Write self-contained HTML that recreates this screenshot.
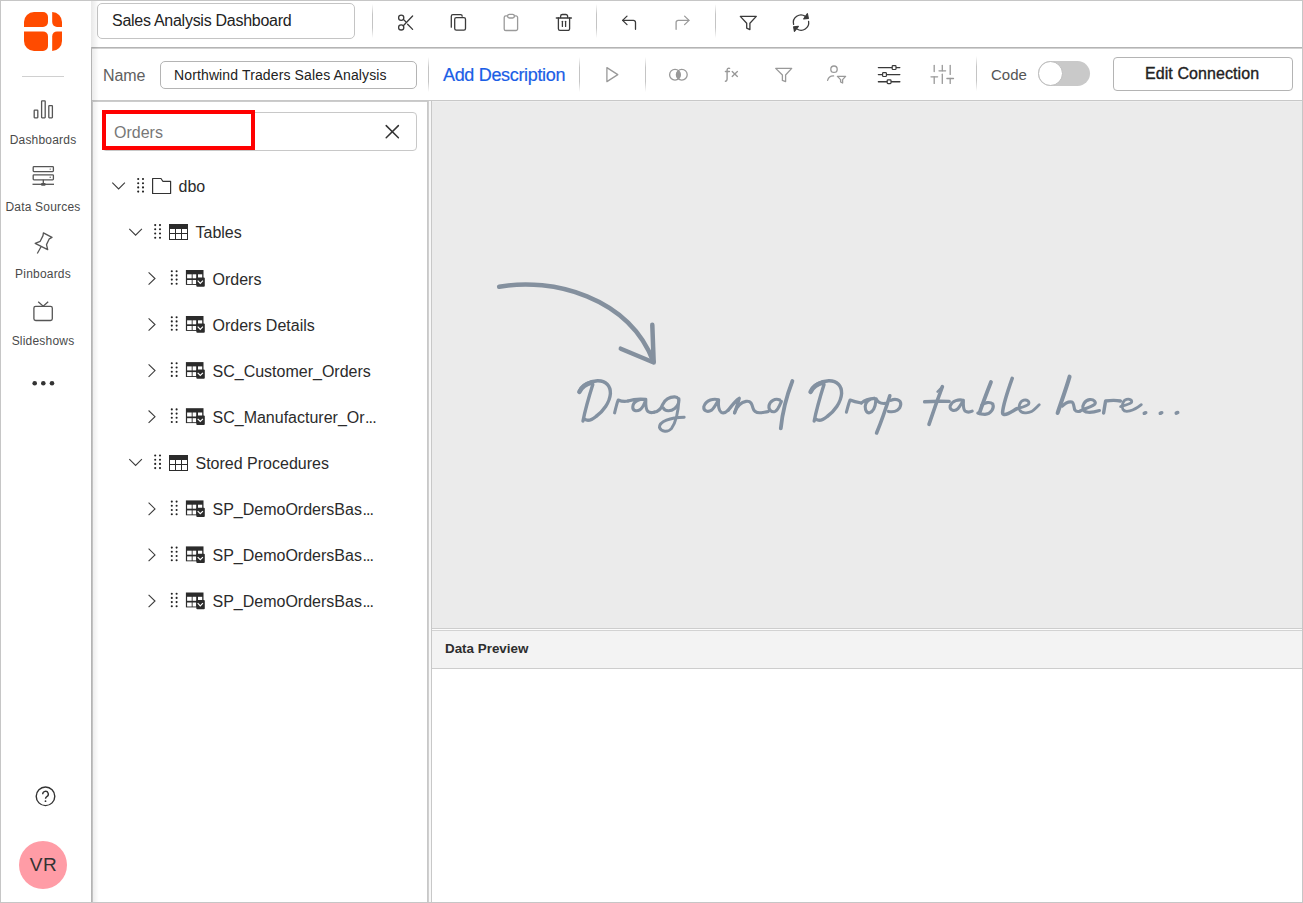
<!DOCTYPE html>
<html><head><meta charset="utf-8">
<style>
*{margin:0;padding:0;box-sizing:border-box}
html,body{width:1303px;height:903px;overflow:hidden;background:#fff;font-family:"Liberation Sans",sans-serif;color:#333}
.a{position:absolute}
#frame{position:absolute;left:0;top:0;width:1303px;height:903px;border:1px solid #c6c6c6;pointer-events:none;z-index:50}
.lbl{position:absolute;left:0;width:86px;text-align:center;font-size:12px;line-height:14px;color:#4a4a4a;letter-spacing:0.2px;white-space:nowrap}
.sep{position:absolute;width:1px;background:linear-gradient(rgba(196,196,196,0),#c4c4c4 30%,#c4c4c4 70%,rgba(196,196,196,0))}
svg{position:absolute;overflow:visible}
.t{position:absolute;white-space:nowrap;line-height:20px}
.row{position:absolute;left:0;width:330px;height:46px}
.row .tx{position:absolute;top:7px;font-size:16px;line-height:20px;color:#2b2b2b;white-space:nowrap}
</style></head><body>
<div id="frame"></div>

<!-- ============ Sidebar ============ -->
<svg style="left:24px;top:11.5px" width="38" height="39" viewBox="0 0 38 39">
  <g fill="#ff4b00">
  <path d="M0 15 V10 A10 10 0 0 1 10 0 H19 A5 5 0 0 1 24 5 V10 A5 5 0 0 1 19 15 Z"/>
  <path d="M28.2 0 A9.8 10 0 0 1 38 10 V15 H33 A4.8 5 0 0 1 28.2 10 Z"/>
  <path d="M0 19.4 H19 A5 5 0 0 1 24 24.4 V34 A5 5 0 0 1 19 39 H10 A10 10 0 0 1 0 29 Z"/>
  <path d="M33 19.4 H38 V29 A9.8 10 0 0 1 28.2 39 V24.4 A4.8 5 0 0 1 33 19.4 Z"/>
  </g>
</svg>
<div class="a" style="left:22px;top:76px;width:42px;height:1px;background:#d0d0d0"></div>

<!-- dashboards icon -->
<svg style="left:0;top:0" width="91" height="400" viewBox="0 0 91 400">
  <g fill="none" stroke="#555" stroke-width="1.3">
    <rect x="34.2" y="110.2" width="3.6" height="7.6" rx="0.5"/>
    <rect x="41.6" y="100.9" width="3.6" height="16.9" rx="0.5"/>
    <rect x="48.8" y="105.7" width="3.6" height="12.1" rx="0.5"/>
    <!-- server -->
    <rect x="33.2" y="166.6" width="20.2" height="5" rx="0.8"/>
    <rect x="33.2" y="174.8" width="20.2" height="5" rx="0.8"/>
    <line x1="43.3" y1="179.8" x2="43.3" y2="184"/>
    <line x1="32.5" y1="184.3" x2="54" y2="184.3"/>
    <!-- pin -->
    <path d="M43.4 232.9 L52 237.4 L49.3 238.8 L46.5 244.6 L47.7 249.7 L35.2 243.4 L40.2 241.3 L43 235.6 Z" stroke-linejoin="round"/>
    <line x1="41.2" y1="246.5" x2="37.3" y2="253.5"/>
    <!-- tv -->
    <rect x="33.9" y="306.3" width="18.4" height="14.2" rx="1.8"/>
    <polyline points="38.2,301.8 43.2,306.2 48.2,301.8"/>
  </g>
  <g fill="#555">
    <rect x="41" y="182.9" width="4.6" height="2.8" rx="1"/>
    <circle cx="50.2" cy="169.1" r="0.7"/>
    <circle cx="50.2" cy="177.3" r="0.7"/>
  </g>
  <g fill="#333">
    <circle cx="34.7" cy="383.2" r="2.3"/>
    <circle cx="43.3" cy="383.2" r="2.3"/>
    <circle cx="52" cy="383.2" r="2.3"/>
  </g>
</svg>
<div class="lbl" style="top:133px">Dashboards</div>
<div class="lbl" style="top:200px">Data Sources</div>
<div class="lbl" style="top:267px">Pinboards</div>
<div class="lbl" style="top:334px">Slideshows</div>

<!-- help -->
<svg style="left:35px;top:786px" width="21" height="21" viewBox="0 0 21 21">
  <circle cx="10.5" cy="10.3" r="9.3" fill="none" stroke="#333" stroke-width="1.4"/>
  <path d="M7.7 8.2 A2.8 2.8 0 1 1 11.8 10.6 C10.8 11.2 10.5 11.6 10.5 12.8" fill="none" stroke="#333" stroke-width="1.4"/>
  <circle cx="10.5" cy="15.2" r="0.9" fill="#333"/>
</svg>
<!-- avatar -->
<div class="a" style="left:19px;top:841px;width:48px;height:48px;border-radius:50%;background:#ff9ca6"></div>
<div class="t" style="left:19.5px;top:854.5px;width:48px;text-align:center;font-size:19px;color:#333;letter-spacing:0.6px">VR</div>

<!-- main area left border + shadow -->
<div class="a" style="left:91px;top:47px;width:1px;height:856px;background:#c4c4c4"></div>
<div class="a" style="left:91px;top:1px;width:8px;height:901px;background:linear-gradient(90deg,rgba(0,0,0,0.09),rgba(0,0,0,0));z-index:5"></div>


<!-- ============ Top toolbar ============ -->
<div class="a" style="left:97px;top:3px;width:258px;height:36px;border:1px solid #c4c4c4;border-radius:5px"></div>
<div class="t" style="left:112px;top:11px;font-size:16px;color:#222;letter-spacing:-0.27px">Sales Analysis Dashboard</div>
<div class="sep" style="left:372px;top:4px;height:34px"></div>
<div class="sep" style="left:596px;top:4px;height:34px"></div>
<div class="sep" style="left:715px;top:4px;height:34px"></div>
<svg style="left:0;top:0" width="1303" height="100" viewBox="0 0 1303 100">
  <g fill="none" stroke="#3a3a3a" stroke-width="1.3" stroke-linecap="round" stroke-linejoin="round">
    <!-- scissors -->
    <circle cx="401.2" cy="17.8" r="2.6"/>
    <circle cx="401.2" cy="27.4" r="2.6"/>
    <line x1="403.3" y1="25.8" x2="412.6" y2="16"/>
    <line x1="403.4" y1="19.4" x2="405.8" y2="21.8"/>
    <line x1="407.6" y1="24.2" x2="412.6" y2="29.4"/>
    <!-- copy -->
    <path d="M451.3 27.2 V16.2 A1.6 1.6 0 0 1 452.9 14.6 H460.6 A1.6 1.6 0 0 1 462.2 16.2"/>
    <rect x="454.7" y="17.6" width="10.8" height="12.6" rx="1.6"/>
    <!-- trash -->
    <line x1="556.4" y1="18" x2="571.3" y2="18" stroke-width="1.6"/>
    <path d="M560.6 17.6 V16.3 A1.8 1.8 0 0 1 562.4 14.5 H565.8 A1.8 1.8 0 0 1 567.6 16.3 V17.6"/>
    <path d="M558.4 18 V28.8 A1.6 1.6 0 0 0 560 30.4 H568 A1.6 1.6 0 0 0 569.6 28.8 V18"/>
    <line x1="562.4" y1="21.3" x2="562.4" y2="26.4"/>
    <line x1="565.6" y1="21.3" x2="565.6" y2="26.4"/>
    <!-- undo -->
    <path d="M627 16.1 L622.6 20.4 L627 24.6"/>
    <path d="M622.8 20.4 H633.4 A2 2 0 0 1 635.5 22.4 V29.3"/>
    <!-- filter -->
    <path d="M740.3 16.4 H756.3 L749.9 23.2 V29.6 L746.7 28.2 V23.2 Z"/>
    <!-- refresh -->
    <path d="M793.6 24.4 A7.6 7.6 0 0 1 805.4 16.4"/>
    <path d="M808.6 21.4 A7.6 7.6 0 0 1 797 29"/>
  </g>
  <g fill="none" stroke="#9a9a9a" stroke-width="1.3" stroke-linecap="round" stroke-linejoin="round">
    <!-- paste -->
    <path d="M507.4 15.9 H505.8 A1.6 1.6 0 0 0 504.2 17.5 V28.9 A1.6 1.6 0 0 0 505.8 30.5 H516 A1.6 1.6 0 0 0 517.6 28.9 V17.5 A1.6 1.6 0 0 0 516 15.9 H514.4"/>
    <rect x="507.6" y="14.4" width="6.8" height="3.6" rx="1.8"/>
    <!-- redo -->
    <path d="M684.6 16.1 L689 20.4 L684.6 24.6"/>
    <path d="M688.8 20.4 H678.2 A2 2 0 0 0 676.1 22.4 V29.3"/>
  </g>
  <g fill="#3a3a3a">
    <path d="M803.6 19 L807.4 13.6 L808.4 18.4 Z" stroke="#3a3a3a" stroke-width="1.1" stroke-linejoin="round"/>
    <path d="M798.4 26.4 L794.4 31.4 L793.6 26.8 Z" stroke="#3a3a3a" stroke-width="1.1" stroke-linejoin="round"/>
  </g>
</svg>
<div class="a" style="left:92px;top:47px;width:1211px;height:1px;background:#b4b4b4"></div>
<div class="a" style="left:92px;top:48px;width:1211px;height:1px;background:#d2d2d2"></div>

<!-- ============ Second toolbar ============ -->
<div class="t" style="left:103px;top:65.5px;font-size:16px;color:#606060;letter-spacing:-0.1px">Name</div>
<div class="a" style="left:160px;top:61px;width:257px;height:28px;border:1px solid #b4b4b4;border-radius:5px"></div>
<div class="t" style="left:174px;top:65px;font-size:14px;color:#222;letter-spacing:0.13px">Northwind Traders Sales Analysis</div>
<div class="sep" style="left:428px;top:57px;height:35px"></div>
<div class="t" style="left:443px;top:65px;font-size:18px;color:#1a5ee6;letter-spacing:-0.33px;-webkit-text-stroke:0.2px #1a5ee6">Add Description</div>
<div class="sep" style="left:579px;top:57px;height:35px"></div>
<div class="sep" style="left:645px;top:57px;height:35px"></div>
<div class="sep" style="left:976px;top:56px;height:35px"></div>
<svg style="left:0;top:0" width="1303" height="100" viewBox="0 0 1303 100">
  <g fill="none" stroke="#999" stroke-width="1.3" stroke-linecap="round" stroke-linejoin="round">
    <path d="M606.9 67.6 L617.8 74.6 L606.9 81.6 Z"/>
    <circle cx="675" cy="74.7" r="5.4"/>
    <circle cx="681.8" cy="74.7" r="5.4"/>
    <path d="M775.7 68.4 H791.7 L785.6 75 V81.6 L782.4 80.4 V75 Z"/>
    <circle cx="834" cy="69.2" r="3.2"/>
    <path d="M827.6 80.3 A6 6 0 0 1 833.6 75.9"/>
    <path d="M837.4 76.4 H845.6 L842.6 79.6 V83 L840.6 82 V79.6 Z"/>
    <line x1="934.2" y1="65.4" x2="934.2" y2="71.6"/>
    <line x1="934.2" y1="76.8" x2="934.2" y2="83.4"/>
    <line x1="931" y1="76.8" x2="937.6" y2="76.8"/>
    <line x1="942.3" y1="65.4" x2="942.3" y2="70.8"/>
    <line x1="939" y1="70.8" x2="945.6" y2="70.8"/>
    <line x1="942.3" y1="74.2" x2="942.3" y2="83.4"/>
    <line x1="950.2" y1="65.4" x2="950.2" y2="74.4"/>
    <line x1="946.9" y1="78.5" x2="953.5" y2="78.5"/>
    <line x1="950.2" y1="78.5" x2="950.2" y2="83.4"/>
  </g>
  <path d="M678.4 70.4 A5.4 5.4 0 0 1 678.4 79 A5.4 5.4 0 0 1 678.4 70.4 Z" fill="#999"/>
  <g fill="none" stroke="#3a3a3a" stroke-width="1.4" stroke-linecap="round">
    <line x1="878.4" y1="67.6" x2="899.8" y2="67.6"/>
    <line x1="878.4" y1="74.6" x2="899.8" y2="74.6"/>
    <line x1="878.4" y1="81.7" x2="899.8" y2="81.7"/>
  </g>
  <g fill="#fff" stroke="#3a3a3a" stroke-width="1.2">
    <rect x="892.2" y="65.7" width="3.8" height="3.8" rx="0.8"/>
    <rect x="882.6" y="72.7" width="3.8" height="3.8" rx="0.8"/>
    <rect x="887.2" y="79.8" width="3.8" height="3.8" rx="0.8"/>
  </g>
</svg>
<svg style="left:0;top:0" width="760" height="100" viewBox="0 0 760 100">
  <g fill="none" stroke="#999" stroke-width="1.4" stroke-linecap="round">
    <path d="M729.6 68.4 C728 68 727.1 68.6 727.1 70.2 V78.8 C727.1 80.6 726.4 81.2 725.4 81.2"/>
    <line x1="725.4" y1="71.5" x2="729.4" y2="71.5"/>
    <line x1="732.2" y1="71.6" x2="737.4" y2="76.4"/>
    <line x1="737.4" y1="71.6" x2="732.2" y2="76.4"/>
  </g>
</svg>
<div class="t" style="left:991px;top:64.5px;font-size:15px;color:#555">Code</div>
<div class="a" style="left:1038px;top:61px;width:52px;height:25px;border-radius:13px;background:#c9c9c9"></div>
<div class="a" style="left:1038px;top:61px;width:25px;height:25px;border-radius:50%;background:#fff;border:1px solid #bcbcbc"></div>
<div class="a" style="left:1113px;top:57px;width:180px;height:34px;border:1px solid #b4b4b4;border-radius:4px"></div>
<div class="t" style="left:1145px;top:64px;font-size:16px;color:#222;-webkit-text-stroke:0.35px #222;letter-spacing:0.08px">Edit Connection</div>
<div class="a" style="left:92px;top:100px;width:1211px;height:1px;background:#c8c8c8"></div>



<!-- ============ Left panel ============ -->
<div class="a" style="left:92px;top:101px;width:335px;height:1px;background:#cccccc"></div>
<div class="a" style="left:92px;top:101px;width:1px;height:802px;background:#d2d2d2"></div>
<div class="a" style="left:427px;top:101px;width:1px;height:802px;background:#c8c8c8"></div>
<div class="a" style="left:428px;top:101px;width:1px;height:802px;background:#cfcfcf"></div>
<div class="a" style="left:429px;top:101px;width:2px;height:802px;background:#f8f8f8"></div>
<div class="a" style="left:431px;top:101px;width:1px;height:802px;background:#c8c8c8"></div>
<div class="a" style="left:102px;top:112px;width:315px;height:39px;border:1px solid #c8c8c8;border-radius:4px"></div>
<div class="a" style="left:102px;top:110px;width:153px;height:40px;border:4px solid #ff0000"></div>
<div class="t" style="left:114px;top:123px;font-size:16px;color:#777">Orders</div>
<svg style="left:0;top:0" width="430" height="660" viewBox="0 0 430 660">
  <g stroke="#333" stroke-width="1.5" stroke-linecap="round">
    <line x1="386.2" y1="125.6" x2="398.4" y2="137.8"/>
    <line x1="398.4" y1="125.6" x2="386.2" y2="137.8"/>
  </g>
</svg>
<svg style="left:0;top:0" width="430" height="660" viewBox="0 0 430 660">
<polyline points="112.3,182.7 118.6,189.0 124.9,182.7" fill="none" stroke="#3c3c3c" stroke-width="1.1"/>
<circle cx="138.2" cy="179.0" r="1.05" fill="#222"/>
<circle cx="138.2" cy="183.2" r="1.05" fill="#222"/>
<circle cx="138.2" cy="187.4" r="1.05" fill="#222"/>
<circle cx="138.2" cy="191.6" r="1.05" fill="#222"/>
<circle cx="143.0" cy="179.0" r="1.05" fill="#222"/>
<circle cx="143.0" cy="183.2" r="1.05" fill="#222"/>
<circle cx="143.0" cy="187.4" r="1.05" fill="#222"/>
<circle cx="143.0" cy="191.6" r="1.05" fill="#222"/>
<path d="M152.6 193.5 V178.5 H161.0 L162.8 181.3 H170.6 V193.5 Z" fill="none" stroke="#333" stroke-width="1.2" stroke-linejoin="round"/>
<polyline points="129.3,228.8 135.6,235.1 141.9,228.8" fill="none" stroke="#3c3c3c" stroke-width="1.1"/>
<circle cx="155.2" cy="225.1" r="1.05" fill="#222"/>
<circle cx="155.2" cy="229.3" r="1.05" fill="#222"/>
<circle cx="155.2" cy="233.5" r="1.05" fill="#222"/>
<circle cx="155.2" cy="237.7" r="1.05" fill="#222"/>
<circle cx="160.0" cy="225.1" r="1.05" fill="#222"/>
<circle cx="160.0" cy="229.3" r="1.05" fill="#222"/>
<circle cx="160.0" cy="233.5" r="1.05" fill="#222"/>
<circle cx="160.0" cy="237.7" r="1.05" fill="#222"/>
<rect x="169" y="224" width="19" height="16" fill="#2b2b2b"/>
<rect x="170" y="229" width="5" height="4" fill="#fff"/>
<rect x="176" y="229" width="5" height="4" fill="#fff"/>
<rect x="182" y="229" width="5" height="4" fill="#fff"/>
<rect x="170" y="234" width="5" height="5" fill="#fff"/>
<rect x="176" y="234" width="5" height="5" fill="#fff"/>
<rect x="182" y="234" width="5" height="5" fill="#fff"/>
<polyline points="148.6,272.3 155.0,278.5 148.6,284.7" fill="none" stroke="#3c3c3c" stroke-width="1.1"/>
<circle cx="171.8" cy="271.2" r="1.05" fill="#222"/>
<circle cx="171.8" cy="275.4" r="1.05" fill="#222"/>
<circle cx="171.8" cy="279.6" r="1.05" fill="#222"/>
<circle cx="171.8" cy="283.8" r="1.05" fill="#222"/>
<circle cx="176.6" cy="271.2" r="1.05" fill="#222"/>
<circle cx="176.6" cy="275.4" r="1.05" fill="#222"/>
<circle cx="176.6" cy="279.6" r="1.05" fill="#222"/>
<circle cx="176.6" cy="283.8" r="1.05" fill="#222"/>
<rect x="185.9" y="270.0" width="17.6" height="14.9" fill="#2b2b2b"/>
<rect x="187.1" y="274.3" width="4.6" height="4.0" fill="#fff"/>
<rect x="192.6" y="274.3" width="3.6" height="4.0" fill="#fff"/>
<rect x="198.0" y="274.3" width="4.2" height="4.0" fill="#fff"/>
<rect x="187.1" y="280.0" width="4.6" height="4.0" fill="#fff"/>
<rect x="192.6" y="280.0" width="3.6" height="4.0" fill="#fff"/>
<rect x="196.3" y="277.4" width="8.5" height="9.3" rx="1" fill="#2b2b2b"/>
<polyline points="197.7,280.7 200.3,283.3 202.9,280.7" fill="none" stroke="#fff" stroke-width="1.2"/>
<polyline points="148.6,318.3 155.0,324.5 148.6,330.7" fill="none" stroke="#3c3c3c" stroke-width="1.1"/>
<circle cx="171.8" cy="317.2" r="1.05" fill="#222"/>
<circle cx="171.8" cy="321.4" r="1.05" fill="#222"/>
<circle cx="171.8" cy="325.6" r="1.05" fill="#222"/>
<circle cx="171.8" cy="329.8" r="1.05" fill="#222"/>
<circle cx="176.6" cy="317.2" r="1.05" fill="#222"/>
<circle cx="176.6" cy="321.4" r="1.05" fill="#222"/>
<circle cx="176.6" cy="325.6" r="1.05" fill="#222"/>
<circle cx="176.6" cy="329.8" r="1.05" fill="#222"/>
<rect x="185.9" y="316.0" width="17.6" height="14.9" fill="#2b2b2b"/>
<rect x="187.1" y="320.3" width="4.6" height="4.0" fill="#fff"/>
<rect x="192.6" y="320.3" width="3.6" height="4.0" fill="#fff"/>
<rect x="198.0" y="320.3" width="4.2" height="4.0" fill="#fff"/>
<rect x="187.1" y="326.0" width="4.6" height="4.0" fill="#fff"/>
<rect x="192.6" y="326.0" width="3.6" height="4.0" fill="#fff"/>
<rect x="196.3" y="323.4" width="8.5" height="9.3" rx="1" fill="#2b2b2b"/>
<polyline points="197.7,326.7 200.3,329.3 202.9,326.7" fill="none" stroke="#fff" stroke-width="1.2"/>
<polyline points="148.6,364.4 155.0,370.6 148.6,376.8" fill="none" stroke="#3c3c3c" stroke-width="1.1"/>
<circle cx="171.8" cy="363.3" r="1.05" fill="#222"/>
<circle cx="171.8" cy="367.5" r="1.05" fill="#222"/>
<circle cx="171.8" cy="371.7" r="1.05" fill="#222"/>
<circle cx="171.8" cy="375.9" r="1.05" fill="#222"/>
<circle cx="176.6" cy="363.3" r="1.05" fill="#222"/>
<circle cx="176.6" cy="367.5" r="1.05" fill="#222"/>
<circle cx="176.6" cy="371.7" r="1.05" fill="#222"/>
<circle cx="176.6" cy="375.9" r="1.05" fill="#222"/>
<rect x="185.9" y="362.1" width="17.6" height="14.9" fill="#2b2b2b"/>
<rect x="187.1" y="366.4" width="4.6" height="4.0" fill="#fff"/>
<rect x="192.6" y="366.4" width="3.6" height="4.0" fill="#fff"/>
<rect x="198.0" y="366.4" width="4.2" height="4.0" fill="#fff"/>
<rect x="187.1" y="372.1" width="4.6" height="4.0" fill="#fff"/>
<rect x="192.6" y="372.1" width="3.6" height="4.0" fill="#fff"/>
<rect x="196.3" y="369.5" width="8.5" height="9.3" rx="1" fill="#2b2b2b"/>
<polyline points="197.7,372.8 200.3,375.4 202.9,372.8" fill="none" stroke="#fff" stroke-width="1.2"/>
<polyline points="148.6,410.5 155.0,416.7 148.6,422.9" fill="none" stroke="#3c3c3c" stroke-width="1.1"/>
<circle cx="171.8" cy="409.4" r="1.05" fill="#222"/>
<circle cx="171.8" cy="413.6" r="1.05" fill="#222"/>
<circle cx="171.8" cy="417.8" r="1.05" fill="#222"/>
<circle cx="171.8" cy="422.0" r="1.05" fill="#222"/>
<circle cx="176.6" cy="409.4" r="1.05" fill="#222"/>
<circle cx="176.6" cy="413.6" r="1.05" fill="#222"/>
<circle cx="176.6" cy="417.8" r="1.05" fill="#222"/>
<circle cx="176.6" cy="422.0" r="1.05" fill="#222"/>
<rect x="185.9" y="408.2" width="17.6" height="14.9" fill="#2b2b2b"/>
<rect x="187.1" y="412.5" width="4.6" height="4.0" fill="#fff"/>
<rect x="192.6" y="412.5" width="3.6" height="4.0" fill="#fff"/>
<rect x="198.0" y="412.5" width="4.2" height="4.0" fill="#fff"/>
<rect x="187.1" y="418.2" width="4.6" height="4.0" fill="#fff"/>
<rect x="192.6" y="418.2" width="3.6" height="4.0" fill="#fff"/>
<rect x="196.3" y="415.6" width="8.5" height="9.3" rx="1" fill="#2b2b2b"/>
<polyline points="197.7,418.9 200.3,421.5 202.9,418.9" fill="none" stroke="#fff" stroke-width="1.2"/>
<polyline points="129.3,459.2 135.6,465.5 141.9,459.2" fill="none" stroke="#3c3c3c" stroke-width="1.1"/>
<circle cx="155.2" cy="455.5" r="1.05" fill="#222"/>
<circle cx="155.2" cy="459.7" r="1.05" fill="#222"/>
<circle cx="155.2" cy="463.9" r="1.05" fill="#222"/>
<circle cx="155.2" cy="468.1" r="1.05" fill="#222"/>
<circle cx="160.0" cy="455.5" r="1.05" fill="#222"/>
<circle cx="160.0" cy="459.7" r="1.05" fill="#222"/>
<circle cx="160.0" cy="463.9" r="1.05" fill="#222"/>
<circle cx="160.0" cy="468.1" r="1.05" fill="#222"/>
<rect x="169" y="455" width="19" height="16" fill="#2b2b2b"/>
<rect x="170" y="460" width="5" height="4" fill="#fff"/>
<rect x="176" y="460" width="5" height="4" fill="#fff"/>
<rect x="182" y="460" width="5" height="4" fill="#fff"/>
<rect x="170" y="465" width="5" height="5" fill="#fff"/>
<rect x="176" y="465" width="5" height="5" fill="#fff"/>
<rect x="182" y="465" width="5" height="5" fill="#fff"/>
<polyline points="148.6,502.7 155.0,508.9 148.6,515.1" fill="none" stroke="#3c3c3c" stroke-width="1.1"/>
<circle cx="171.8" cy="501.6" r="1.05" fill="#222"/>
<circle cx="171.8" cy="505.8" r="1.05" fill="#222"/>
<circle cx="171.8" cy="510.0" r="1.05" fill="#222"/>
<circle cx="171.8" cy="514.2" r="1.05" fill="#222"/>
<circle cx="176.6" cy="501.6" r="1.05" fill="#222"/>
<circle cx="176.6" cy="505.8" r="1.05" fill="#222"/>
<circle cx="176.6" cy="510.0" r="1.05" fill="#222"/>
<circle cx="176.6" cy="514.2" r="1.05" fill="#222"/>
<rect x="185.9" y="500.4" width="17.6" height="14.9" fill="#2b2b2b"/>
<rect x="187.1" y="504.7" width="4.6" height="4.0" fill="#fff"/>
<rect x="192.6" y="504.7" width="3.6" height="4.0" fill="#fff"/>
<rect x="198.0" y="504.7" width="4.2" height="4.0" fill="#fff"/>
<rect x="187.1" y="510.4" width="4.6" height="4.0" fill="#fff"/>
<rect x="192.6" y="510.4" width="3.6" height="4.0" fill="#fff"/>
<rect x="196.3" y="507.8" width="8.5" height="9.3" rx="1" fill="#2b2b2b"/>
<polyline points="197.7,511.1 200.3,513.7 202.9,511.1" fill="none" stroke="#fff" stroke-width="1.2"/>
<polyline points="148.6,548.7 155.0,554.9 148.6,561.1" fill="none" stroke="#3c3c3c" stroke-width="1.1"/>
<circle cx="171.8" cy="547.6" r="1.05" fill="#222"/>
<circle cx="171.8" cy="551.8" r="1.05" fill="#222"/>
<circle cx="171.8" cy="556.0" r="1.05" fill="#222"/>
<circle cx="171.8" cy="560.2" r="1.05" fill="#222"/>
<circle cx="176.6" cy="547.6" r="1.05" fill="#222"/>
<circle cx="176.6" cy="551.8" r="1.05" fill="#222"/>
<circle cx="176.6" cy="556.0" r="1.05" fill="#222"/>
<circle cx="176.6" cy="560.2" r="1.05" fill="#222"/>
<rect x="185.9" y="546.4" width="17.6" height="14.9" fill="#2b2b2b"/>
<rect x="187.1" y="550.7" width="4.6" height="4.0" fill="#fff"/>
<rect x="192.6" y="550.7" width="3.6" height="4.0" fill="#fff"/>
<rect x="198.0" y="550.7" width="4.2" height="4.0" fill="#fff"/>
<rect x="187.1" y="556.4" width="4.6" height="4.0" fill="#fff"/>
<rect x="192.6" y="556.4" width="3.6" height="4.0" fill="#fff"/>
<rect x="196.3" y="553.8" width="8.5" height="9.3" rx="1" fill="#2b2b2b"/>
<polyline points="197.7,557.1 200.3,559.7 202.9,557.1" fill="none" stroke="#fff" stroke-width="1.2"/>
<polyline points="148.6,594.8 155.0,601.0 148.6,607.2" fill="none" stroke="#3c3c3c" stroke-width="1.1"/>
<circle cx="171.8" cy="593.7" r="1.05" fill="#222"/>
<circle cx="171.8" cy="597.9" r="1.05" fill="#222"/>
<circle cx="171.8" cy="602.1" r="1.05" fill="#222"/>
<circle cx="171.8" cy="606.3" r="1.05" fill="#222"/>
<circle cx="176.6" cy="593.7" r="1.05" fill="#222"/>
<circle cx="176.6" cy="597.9" r="1.05" fill="#222"/>
<circle cx="176.6" cy="602.1" r="1.05" fill="#222"/>
<circle cx="176.6" cy="606.3" r="1.05" fill="#222"/>
<rect x="185.9" y="592.5" width="17.6" height="14.9" fill="#2b2b2b"/>
<rect x="187.1" y="596.8" width="4.6" height="4.0" fill="#fff"/>
<rect x="192.6" y="596.8" width="3.6" height="4.0" fill="#fff"/>
<rect x="198.0" y="596.8" width="4.2" height="4.0" fill="#fff"/>
<rect x="187.1" y="602.5" width="4.6" height="4.0" fill="#fff"/>
<rect x="192.6" y="602.5" width="3.6" height="4.0" fill="#fff"/>
<rect x="196.3" y="599.9" width="8.5" height="9.3" rx="1" fill="#2b2b2b"/>
<polyline points="197.7,603.2 200.3,605.8 202.9,603.2" fill="none" stroke="#fff" stroke-width="1.2"/>
</svg>
<div class="t" style="left:178.5px;top:177px;font-size:16px;color:#2b2b2b">dbo</div>
<div class="t" style="left:195.5px;top:223px;font-size:16px;color:#2b2b2b">Tables</div>
<div class="t" style="left:212.5px;top:270px;font-size:16px;color:#2b2b2b">Orders</div>
<div class="t" style="left:212.5px;top:316px;font-size:16px;color:#2b2b2b">Orders Details</div>
<div class="t" style="left:212.5px;top:362px;font-size:16px;color:#2b2b2b">SC_Customer_Orders</div>
<div class="t" style="left:212.5px;top:408px;font-size:16px;color:#2b2b2b">SC_Manufacturer_Or<span style="letter-spacing:-0.9px;margin-left:0.5px">...</span></div>
<div class="t" style="left:195.5px;top:454px;font-size:16px;color:#2b2b2b">Stored Procedures</div>
<div class="t" style="left:212.5px;top:500px;font-size:16px;color:#2b2b2b">SP_DemoOrdersBas<span style="letter-spacing:-0.9px;margin-left:0.5px">...</span></div>
<div class="t" style="left:212.5px;top:546px;font-size:16px;color:#2b2b2b">SP_DemoOrdersBas<span style="letter-spacing:-0.9px;margin-left:0.5px">...</span></div>
<div class="t" style="left:212.5px;top:592px;font-size:16px;color:#2b2b2b">SP_DemoOrdersBas<span style="letter-spacing:-0.9px;margin-left:0.5px">...</span></div>
<!-- ============ Canvas ============ -->
<div class="a" style="left:432px;top:101px;width:870px;height:527px;background:#ebebeb"></div>
<div class="a" style="left:432px;top:101px;width:870px;height:1px;background:#efefef"></div>
<div class="a" style="left:432px;top:628px;width:870px;height:1px;background:#cdcdcd"></div>
<div class="a" style="left:432px;top:629px;width:870px;height:1px;background:#fcfcfc"></div>
<div class="a" style="left:432px;top:630px;width:870px;height:1px;background:#d2d2d2"></div>
<div class="a" style="left:432px;top:631px;width:870px;height:37px;background:#f3f3f3"></div>
<div class="a" style="left:432px;top:668px;width:870px;height:1px;background:#cdcdcd"></div>
<div class="t" style="left:445px;top:639px;font-size:13.4px;font-weight:bold;color:#2e2e2e">Data Preview</div>
<svg style="left:0;top:0" width="1303" height="660" viewBox="0 0 1303 660">
  <g fill="none" stroke="#84909e" stroke-width="4.5" stroke-linecap="round" stroke-linejoin="round">
    <path d="M499.2 286.8 C552 277 629 297 653.4 361.6"/>
    <path d="M652.3 324.8 L653.7 362.5 L620.8 348.7"/>
  </g>
</svg>
<svg style="left:0;top:0" width="1303" height="660" viewBox="0 0 1303 660">
<g fill="none" stroke="#8391a1" stroke-width="3.1" stroke-linecap="round" stroke-linejoin="round">
  <g>
    <path d="M579.4 391.6 C582 385.5 589 381.2 597.5 380.8 C606 380.6 610.6 386 610.4 393.5 C609.8 402.5 603 411.5 596 416.5 C592 419.8 587.5 421 585 419.4" stroke-width="3.4"/>
    <path d="M579.4 391.8 C581.5 387 587 383.5 592 382.4" stroke-width="4.6"/>
    <path d="M592.8 384.6 C589.2 396 585.2 410 583 421" stroke-width="3.4"/>
  </g>
  <path d="M614.6 412.8 C616 407 617.2 402.5 618.2 400 C621 401.2 624.5 401.8 628 401"/>
  <path d="M628 401 C631 400 636 398.4 645.8 399.4 C640 398.4 633.2 401.4 632.8 406.6 C632.4 410.6 636.4 412 640.2 409.6 C643 407.4 644.8 403 645.8 399.4 C645.6 404.2 645.8 409.6 648 411.6 C650 413 652 412.8 654 412.2"/>
  <path d="M654 412.2 C658.5 411.6 661 409 662.6 404.6 C664.4 399.6 669.6 396.8 674.6 396.9 C678.2 397.2 679.6 399.6 678.6 403 C677.4 407.2 672.8 410.6 668.6 410.8 C666 410.9 664 409.6 663.4 408"/>
  <path d="M679 398.6 C678.4 410.5 676.2 422 671.4 428.6 C668 432.4 661.4 432.2 659.4 427.4 C659.4 421.4 670 417.4 684.2 417.2" stroke-width="2.9"/>
  <path d="M718.6 399.8 C714 398.4 706 399.6 703.8 406.6 C703.4 411 707.6 412.6 711.6 410.2 C714.6 407.6 717 402.2 718.6 399.8 C718.2 404.2 718.6 410.2 721.2 412.2 C723.2 413.6 726.2 412.2 728.2 410.2"/>
  <path d="M728.2 410.2 C732 405.2 736 400.2 739.2 398.4 C738 403.2 736 409.2 734.6 413" stroke-width="3.4"/>
  <path d="M734.8 412 C737 406.6 741 402.2 746 401.4 C751 400.6 752 404.2 753 408.2 C754 412.2 758 413.2 762 412.6 C764 412.2 766 412 768.4 411.4"/>
  <path d="M779.8 400 C775 397.8 769.8 401.2 769 405.6 C768.4 410 771.6 412.8 775.2 411.4 C778 410.2 779.6 405.6 781.4 401.4"/>
  <path d="M792.4 381 C787.2 394.5 782.6 410 780.8 428.4" stroke-width="3.8"/>
  <g transform="translate(231.2 0)">
    <path d="M579.4 391.6 C582 385.5 589 381.2 597.5 380.8 C606 380.6 610.6 386 610.4 393.5 C609.8 402.5 603 411.5 596 416.5 C592 419.8 587.5 421 585 419.4" stroke-width="3.4"/>
    <path d="M579.4 391.8 C581.5 387 587 383.5 592 382.4" stroke-width="4.6"/>
    <path d="M592.8 384.6 C589.2 396 585.2 410 583 421" stroke-width="3.4"/>
  </g>
  <path d="M846.4 412.2 C848 406.2 849 402.2 850.1 400 C853 401.2 857 402.2 861.4 403"/>
  <path d="M861.4 403 C863.5 401 867 398.6 874.6 398.4 C869 398.4 865.4 402.2 865.2 406.4 C865.2 411 867.2 413.2 869.6 412.8 C873 412 875.4 407 875.6 402.4 C875.6 400.4 876 398.8 876.2 398.8 C877.4 402 880.4 403.8 885.2 403.4"/>
  <path d="M889.8 395.8 C886 408.2 880.4 423.8 876.6 433" stroke-width="3.6"/>
  <path d="M890.8 400.4 C895 398.4 901 399.4 900.8 404.2 C900.4 409.2 896 413 888.4 411.4"/>
  <path d="M942.4 386.6 C938 398.2 932.4 414.2 929 424.4" stroke-width="3.6"/>
  <path d="M937.4 391.8 L942.4 386.6" stroke-width="2.2"/>
  <path d="M924.6 401.8 C932 401.2 940 401 949.2 401.4" stroke-width="3.4"/>
  <path d="M963.4 400.4 C959 399 952 400.6 950.1 406 C949.6 410.6 954.6 412 958 408.6 C960 406.6 962 402.6 963.4 400.4 C963.2 404.2 963.4 409.2 965 411 C967 412.4 970 412.2 972.2 411.2"/>
  <path d="M991 382 C987 392.2 982.4 404.2 979.4 413.2" stroke-width="3.8"/>
  <path d="M981.6 405.4 C984 402.4 990 401.4 992.8 404 C994.4 408.2 991 414 985 414.4 C982 414.4 979.6 414 977.8 413.2"/>
  <path d="M1012.2 378.4 C1008 390.2 1003.4 404.2 1002.6 412 C1002.4 415 1005 415 1008 413.6 C1011 412.2 1014 410.2 1017 408.6" stroke-width="3.5"/>
  <path d="M1017 408.6 C1020 407.6 1026 406.6 1028.5 404.2 C1030 401.6 1027 399.4 1023.8 400.2 C1019.6 401.4 1018.4 406.5 1019.6 409.8 C1021.4 413.6 1028 413.4 1031.5 411.6 C1034.5 409.8 1037 406.8 1039.2 404.8" stroke-width="2.8"/>
  <path d="M1069.6 376.6 C1066 389.2 1060.4 404.2 1057.6 413" stroke-width="4"/>
  <path d="M1062.2 406.2 C1065 403.2 1069 401.4 1072 402 C1074.4 403.4 1073.6 408.2 1075 410.2 C1076 411.6 1078 411.6 1080 411.2"/>
  <path d="M1080 411 C1083 409 1090 407.5 1094.5 404.5 C1096.5 402.5 1094 399 1089.5 399.6 C1084.5 400.5 1082 405.5 1083 409 C1084 412.8 1090 413.5 1099.5 410.5"/>
  <path d="M1103.6 413 C1104.2 409.2 1105 404.4 1105.6 401 C1110 400.4 1115 400 1120.4 401" stroke-width="3.4"/>
  <path d="M1120.6 406.5 C1124 405.5 1129 404.5 1131.5 402.5 C1132.5 400 1129.5 398.6 1126.5 399.4 C1122.5 400.5 1121.5 406.5 1123 409.5 C1125 413 1133 411.5 1141.3 404.7" stroke-width="2.8"/>
</g>
<g fill="#8391a1">
  <ellipse cx="1145" cy="413" rx="2.6" ry="1.9" transform="rotate(-20 1145 413)"/>
  <ellipse cx="1161" cy="413" rx="2.6" ry="1.9" transform="rotate(-20 1161 413)"/>
  <ellipse cx="1177" cy="412.8" rx="2.6" ry="1.9" transform="rotate(-20 1177 412.8)"/>
</g>
</svg>

</body></html>
